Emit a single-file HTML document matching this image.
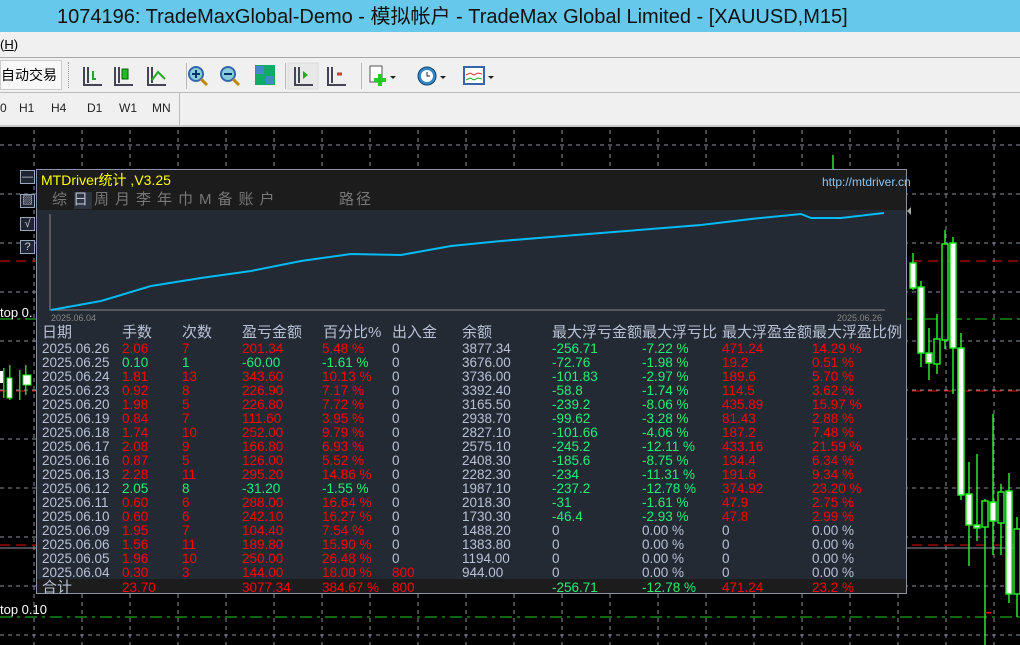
<!DOCTYPE html>
<html><head><meta charset="utf-8"><style>
*{margin:0;padding:0;box-sizing:border-box}
body{width:1020px;height:645px;overflow:hidden;background:#000;position:relative;font-family:"Liberation Sans","Noto Sans CJK SC",sans-serif}
.abs{position:absolute}
#title{left:0;top:0;width:1020px;height:32px;background:#66c8ea;color:#111;font-size:20px;line-height:34px;padding-left:57px;font-family:"Liberation Sans","Noto Sans CJK SC",sans-serif;white-space:nowrap}
#menu{left:0;top:32px;width:1020px;height:25px;background:#f0f0f0;font-size:13px;line-height:25px;color:#000}
#tb{left:0;top:57px;width:1020px;height:68px;background:#f0f0f0;border-top:1px solid #aaa}
.tf{font-size:12px;color:#222;top:101px}
#panel{left:36px;top:169px;width:871px;height:425px;background:#232a33;border:1px solid #8a94a6}
.t{position:absolute;font-size:13px;white-space:nowrap;line-height:14px;font-family:"Liberation Sans","Noto Sans CJK SC",sans-serif}
.g{color:#b8c2d6}.r{color:#f00}.n{color:#22ee77}
.btn{position:absolute;left:20px;width:15px;height:14px;border:1px solid #9aa6bb;background:#1f2530;color:#ccd;font-size:11px;line-height:12px;text-align:center}
</style></head><body>
<svg class="abs" style="left:0;top:125px" width="1020" height="520">
<rect x="0" y="0" width="1020" height="2" fill="#c8c8c8"/>
<g stroke="#8a8f9a" stroke-dasharray="4,4" stroke-width="1">
<line x1="34" y1="5" x2="34" y2="520"/><line x1="82" y1="5" x2="82" y2="520"/><line x1="130" y1="5" x2="130" y2="520"/><line x1="178" y1="5" x2="178" y2="520"/><line x1="226" y1="5" x2="226" y2="520"/><line x1="274" y1="5" x2="274" y2="520"/><line x1="322" y1="5" x2="322" y2="520"/><line x1="370" y1="5" x2="370" y2="520"/><line x1="418" y1="5" x2="418" y2="520"/><line x1="466" y1="5" x2="466" y2="520"/><line x1="514" y1="5" x2="514" y2="520"/><line x1="562" y1="5" x2="562" y2="520"/><line x1="610" y1="5" x2="610" y2="520"/><line x1="658" y1="5" x2="658" y2="520"/><line x1="706" y1="5" x2="706" y2="520"/><line x1="754" y1="5" x2="754" y2="520"/><line x1="802" y1="5" x2="802" y2="520"/><line x1="850" y1="5" x2="850" y2="520"/><line x1="898" y1="5" x2="898" y2="520"/><line x1="946" y1="5" x2="946" y2="520"/><line x1="994" y1="5" x2="994" y2="520"/>
<line x1="0" y1="20" x2="1020" y2="20"/><line x1="0" y1="69" x2="1020" y2="69"/><line x1="0" y1="118" x2="1020" y2="118"/><line x1="0" y1="167" x2="1020" y2="167"/><line x1="0" y1="216" x2="1020" y2="216"/><line x1="0" y1="265" x2="1020" y2="265"/><line x1="0" y1="314" x2="1020" y2="314"/><line x1="0" y1="363" x2="1020" y2="363"/><line x1="0" y1="412" x2="1020" y2="412"/><line x1="0" y1="461" x2="1020" y2="461"/><line x1="0" y1="510" x2="1020" y2="510"/>
</g>
<g stroke="#e01010" stroke-dasharray="10,6"><line x1="0" y1="136" x2="1020" y2="136"/><line x1="0" y1="266" x2="1020" y2="266"/><line x1="0" y1="420" x2="1020" y2="420"/></g>
<g stroke="#22cc22" stroke-dasharray="12,5,3,5"><line x1="0" y1="194" x2="1020" y2="194"/><line x1="0" y1="492" x2="1020" y2="492"/></g>
<line x1="0" y1="423" x2="1020" y2="423" stroke="#8a94a6"/>
<g stroke="#22ee22" stroke-width="1.5">
<line x1="913" y1="128" x2="913" y2="165"/><rect x="910" y="138" width="6" height="25" fill="#fff"/>
<line x1="921" y1="156" x2="921" y2="242"/><rect x="918" y="162" width="6" height="66" fill="#fff"/>
<line x1="929" y1="203" x2="929" y2="255"/><rect x="926" y="228" width="6" height="10" fill="#fff"/>
<line x1="937" y1="189" x2="937" y2="249"/><rect x="934" y="214" width="6" height="25" fill="#000"/>
<line x1="945" y1="105" x2="945" y2="224"/><rect x="942" y="119" width="6" height="96" fill="#000"/>
<line x1="953" y1="112" x2="953" y2="269"/><rect x="950" y="118" width="6" height="105" fill="#fff"/>
<line x1="961" y1="208" x2="961" y2="375"/><rect x="958" y="223" width="6" height="147" fill="#fff"/>
<line x1="969" y1="337" x2="969" y2="441"/><rect x="966" y="369" width="6" height="31" fill="#fff"/>
<line x1="977" y1="329" x2="977" y2="416"/><rect x="974" y="400" width="6" height="3" fill="#fff"/>
<line x1="985" y1="374" x2="985" y2="520"/><rect x="982" y="376" width="6" height="26" fill="#000"/>
<line x1="993" y1="289" x2="993" y2="430"/><rect x="990" y="377" width="6" height="19" fill="#fff"/>
<line x1="1001" y1="359" x2="1001" y2="430"/><rect x="998" y="367" width="6" height="31" fill="#000"/>
<line x1="1009" y1="348" x2="1009" y2="478"/><rect x="1006" y="366" width="6" height="103" fill="#fff"/>
<line x1="1017" y1="392" x2="1017" y2="492"/><rect x="1014" y="404" width="6" height="65" fill="#000"/>
<line x1="833" y1="30" x2="833" y2="45"/>
</g>
<rect x="985" y="487" width="6" height="1.5" fill="#f00"/>
<g fill="#22cc22"><rect x="3" y="243" width="1.5" height="30"/><rect x="9" y="240" width="1.5" height="35"/><rect x="19" y="245" width="1.5" height="30"/><rect x="25" y="240" width="1.5" height="30"/></g>
<rect x="0" y="246" width="3" height="12" fill="#fff"/><rect x="7" y="253" width="5" height="20" fill="#fff" stroke="#2e2" /><rect x="23" y="250" width="8" height="10" fill="#fff" stroke="#2e2"/>
</svg>
<div class="t" style="left:0;top:306px;color:#fff;font-size:13px">top 0.</div>
<div class="t" style="left:0;top:603px;color:#fff;font-size:13px">top 0.10</div>
<div class="btn" style="top:170px">—</div><div class="btn" style="top:194px">▨</div><div class="btn" style="top:217px">√</div><div class="btn" style="top:240px">?</div>

<div id="title" class="abs">1074196: TradeMaxGlobal-Demo - 模拟帐户 - TradeMax Global Limited - [XAUUSD,M15]</div>
<div id="menu" class="abs">(<u>H</u>)</div>
<div id="tb" class="abs">
<div class="abs" style="left:0;top:2px;width:62px;height:30px;border:1px solid #ccc;background:#f8f8f8;font-size:14px;line-height:28px">自动交易</div>
<div class="abs" style="left:68px;top:4px;width:2px;height:26px;border-left:1px dotted #999"></div>
<svg class="abs" style="left:76px;top:4px" width="430" height="28">
<g stroke="#445" stroke-width="2" fill="none"><path d="M8 5v18h18M12 5v16"/><path d="M39 5v18h18M43 5v16"/><path d="M72 5v18h18M76 5v16"/></g>
<path d="M17 9v8h3" stroke="#2a2" stroke-width="2" fill="none"/>
<rect x="46" y="7" width="6" height="10" fill="#2b2" stroke="#060"/>
<path d="M76 18l6-8l7 7" stroke="#2a2" stroke-width="2" fill="none"/>
<rect x="110" y="1" width="1" height="26" fill="#bbb"/>
<circle cx="120" cy="12" r="7" fill="#8cd" stroke="#36a" stroke-width="2"/><path d="M125 17l6 6" stroke="#b80" stroke-width="3"/><path d="M116 12h8M120 8v8" stroke="#036" stroke-width="2"/>
<circle cx="152" cy="12" r="7" fill="#8cd" stroke="#36a" stroke-width="2"/><path d="M157 17l6 6" stroke="#b80" stroke-width="3"/><path d="M148 12h8" stroke="#036" stroke-width="2"/>
<rect x="179" y="3" width="20" height="20" fill="#1a6"/><rect x="180" y="4" width="8" height="8" fill="#48c"/><rect x="190" y="14" width="8" height="8" fill="#48c"/>
<rect x="209" y="1" width="1" height="26" fill="#bbb"/>
<rect x="212" y="1" width="30" height="26" fill="#e8e8e8" stroke="#ddd"/>
<g stroke="#445" stroke-width="2" fill="none"><path d="M219 5v18h18M223 5v16"/><path d="M252 5v18h18M256 5v16"/></g>
<path d="M227 9l5 4l-5 4z" fill="#2a2"/><path d="M266 12h-5" stroke="#d33" stroke-width="3"/>
<rect x="285" y="1" width="1" height="26" fill="#bbb"/>
<rect x="294" y="4" width="12" height="16" fill="#fff" stroke="#555"/><path d="M304 12v12M298 18h12" stroke="#2c2" stroke-width="4"/>
<path d="M314 14h6l-3 3z" fill="#222"/>
<circle cx="351" cy="14" r="9" fill="#38c" stroke="#146" /><circle cx="351" cy="14" r="6" fill="#fff"/><path d="M351 10v4h3" stroke="#222" fill="none"/>
<path d="M364 14h6l-3 3z" fill="#222"/>
<rect x="388" y="5" width="20" height="17" fill="#fff" stroke="#36a" stroke-width="2"/><path d="M390 13l4-2l4 2l4-2l4 1" stroke="#d33" fill="none"/><path d="M390 18l4-2l4 2l4-2l4 1" stroke="#2a2" fill="none"/>
<path d="M412 14h6l-3 3z" fill="#222"/>
</svg>
<div class="abs" style="left:0;top:34px;width:1020px;height:1px;background:#bbb"></div>
<div class="abs" style="left:179px;top:35px;width:1px;height:32px;background:#bbb"></div>
</div>
<div class="abs tf" style="left:0">0</div><div class="abs tf" style="left:19px">H1</div><div class="abs tf" style="left:51px">H4</div><div class="abs tf" style="left:87px">D1</div><div class="abs tf" style="left:119px">W1</div><div class="abs tf" style="left:152px">MN</div>

<div id="panel" class="abs">
<div class="abs" style="left:0;top:0;width:869px;height:40px;background:#1c1c1c"></div>
<div class="t" style="left:4px;top:3px;color:#ffff00;font-size:14px">MTDriver统计 ,V3.25</div>
<div class="t" style="left:785px;top:5px;color:#8ac4f0;font-size:12px">http://mtdriver.cn</div>
<div class="abs" style="left:37px;top:22px;width:18px;height:17px;background:#2c3440"></div>
<div class="t" style="left:15px;top:23px;color:#777;font-size:15px;letter-spacing:6px">综<span style="color:#bbc">日</span>周月李年巾M备账户</div>
<div class="t" style="left:302px;top:23px;color:#777;font-size:15px;letter-spacing:2px">路径</div>
<svg class="abs" style="left:0;top:40px" width="869" height="115">
<path d="M13 4v96h835" stroke="#888" fill="none"/>
<polyline points="14,100 64,91 114,76 164,68 214,61 264,51 314,44 364,45 414,36 464,31 514,27 564,23 614,19 664,15 714,9 764,4 774,8 804,8 847,3" stroke="#00bbf5" stroke-width="2" fill="none"/>
<text x="14" y="111" fill="#888" font-size="9" font-family="Liberation Sans">2025.06.04</text>
<text x="800" y="111" fill="#888" font-size="9" font-family="Liberation Sans">2025.06.26</text>
</svg>
<div class="abs" style="left:866px;top:37px;width:0;height:0;border:4px solid transparent;border-right-color:#aaa"></div>
<div class="abs" style="left:0;top:409px;width:869px;height:14px;background:#1c1c1c"></div>
</div>

<div style="position:absolute;left:0;top:0">
<div class="t g" style="left:42px;top:326px;font-size:15px">日期</div><div class="t g" style="left:122px;top:326px;font-size:15px">手数</div><div class="t g" style="left:182px;top:326px;font-size:15px">次数</div><div class="t g" style="left:242px;top:326px;font-size:15px">盈亏金额</div><div class="t g" style="left:323px;top:326px;font-size:15px">百分比%</div><div class="t g" style="left:392px;top:326px;font-size:15px">出入金</div><div class="t g" style="left:462px;top:326px;font-size:15px">余额</div><div class="t g" style="left:552px;top:326px;font-size:15px">最大浮亏金额</div><div class="t g" style="left:642px;top:326px;font-size:15px">最大浮亏比</div><div class="t g" style="left:722px;top:326px;font-size:15px">最大浮盈金额</div><div class="t g" style="left:812px;top:326px;font-size:15px">最大浮盈比例</div>
</div>
<style>.row{position:absolute;left:0;width:1020px;height:14px}
.row span{position:absolute;top:0;font-size:13.5px;line-height:14px;white-space:nowrap;font-family:"Liberation Sans",sans-serif}
.row span:nth-child(1){left:42px;color:#b8c2d6}.row span:nth-child(2){left:122px}.row span:nth-child(3){left:182px}.row span:nth-child(4){left:242px}.row span:nth-child(5){left:322px}.row span:nth-child(6){left:392px}.row span:nth-child(7){left:462px;color:#b8c2d6}.row span:nth-child(8){left:552px}.row span:nth-child(9){left:642px}.row span:nth-child(10){left:722px}.row span:nth-child(11){left:812px}
.R span{color:#f00}.N span{color:#22ee77}
.row span.g{color:#b8c2d6}.row span.n{color:#22ee77}.row span.r{color:#f00}
</style>
<div class="row R" style="top:342px"><span>2025.06.26</span><span>2.06</span><span>7</span><span>201.34</span><span>5.48 %</span><span class="g">0</span><span>3877.34</span><span class="n">-256.71</span><span class="n">-7.22 %</span><span>471.24</span><span>14.29 %</span></div>
<div class="row N" style="top:356px"><span>2025.06.25</span><span>0.10</span><span>1</span><span>-60.00</span><span>-1.61 %</span><span class="g">0</span><span>3676.00</span><span>-72.76</span><span>-1.98 %</span><span class="r">19.2</span><span class="r">0.51 %</span></div>
<div class="row R" style="top:370px"><span>2025.06.24</span><span>1.81</span><span>13</span><span>343.60</span><span>10.13 %</span><span class="g">0</span><span>3736.00</span><span class="n">-101.83</span><span class="n">-2.97 %</span><span>189.6</span><span>5.70 %</span></div>
<div class="row R" style="top:384px"><span>2025.06.23</span><span>0.92</span><span>8</span><span>226.90</span><span>7.17 %</span><span class="g">0</span><span>3392.40</span><span class="n">-58.8</span><span class="n">-1.74 %</span><span>114.5</span><span>3.62 %</span></div>
<div class="row R" style="top:398px"><span>2025.06.20</span><span>1.98</span><span>5</span><span>226.80</span><span>7.72 %</span><span class="g">0</span><span>3165.50</span><span class="n">-239.2</span><span class="n">-8.06 %</span><span>435.89</span><span>15.97 %</span></div>
<div class="row R" style="top:412px"><span>2025.06.19</span><span>0.84</span><span>7</span><span>111.60</span><span>3.95 %</span><span class="g">0</span><span>2938.70</span><span class="n">-99.62</span><span class="n">-3.28 %</span><span>81.43</span><span>2.88 %</span></div>
<div class="row R" style="top:426px"><span>2025.06.18</span><span>1.74</span><span>10</span><span>252.00</span><span>9.79 %</span><span class="g">0</span><span>2827.10</span><span class="n">-101.66</span><span class="n">-4.06 %</span><span>187.2</span><span>7.48 %</span></div>
<div class="row R" style="top:440px"><span>2025.06.17</span><span>2.08</span><span>9</span><span>166.80</span><span>6.93 %</span><span class="g">0</span><span>2575.10</span><span class="n">-245.2</span><span class="n">-12.11 %</span><span>433.16</span><span>21.59 %</span></div>
<div class="row R" style="top:454px"><span>2025.06.16</span><span>0.87</span><span>5</span><span>126.00</span><span>5.52 %</span><span class="g">0</span><span>2408.30</span><span class="n">-185.6</span><span class="n">-8.75 %</span><span>134.4</span><span>6.34 %</span></div>
<div class="row R" style="top:468px"><span>2025.06.13</span><span>2.28</span><span>11</span><span>295.20</span><span>14.86 %</span><span class="g">0</span><span>2282.30</span><span class="n">-234</span><span class="n">-11.31 %</span><span>191.6</span><span>9.34 %</span></div>
<div class="row N" style="top:482px"><span>2025.06.12</span><span>2.05</span><span>8</span><span>-31.20</span><span>-1.55 %</span><span class="g">0</span><span>1987.10</span><span>-237.2</span><span>-12.78 %</span><span class="r">374.92</span><span class="r">23.20 %</span></div>
<div class="row R" style="top:496px"><span>2025.06.11</span><span>0.60</span><span>6</span><span>288.00</span><span>16.64 %</span><span class="g">0</span><span>2018.30</span><span class="n">-31</span><span class="n">-1.61 %</span><span>47.9</span><span>2.75 %</span></div>
<div class="row R" style="top:510px"><span>2025.06.10</span><span>0.60</span><span>6</span><span>242.10</span><span>16.27 %</span><span class="g">0</span><span>1730.30</span><span class="n">-46.4</span><span class="n">-2.93 %</span><span>47.8</span><span>2.99 %</span></div>
<div class="row R" style="top:524px"><span>2025.06.09</span><span>1.95</span><span>7</span><span>104.40</span><span>7.54 %</span><span class="g">0</span><span>1488.20</span><span class="g">0</span><span class="g">0.00 %</span><span class="g">0</span><span class="g">0.00 %</span></div>
<div class="row R" style="top:538px"><span>2025.06.06</span><span>1.56</span><span>11</span><span>189.80</span><span>15.90 %</span><span class="g">0</span><span>1383.80</span><span class="g">0</span><span class="g">0.00 %</span><span class="g">0</span><span class="g">0.00 %</span></div>
<div class="row R" style="top:552px"><span>2025.06.05</span><span>1.96</span><span>10</span><span>250.00</span><span>26.48 %</span><span class="g">0</span><span>1194.00</span><span class="g">0</span><span class="g">0.00 %</span><span class="g">0</span><span class="g">0.00 %</span></div>
<div class="row R" style="top:566px"><span>2025.06.04</span><span>0.30</span><span>3</span><span>144.00</span><span>18.00 %</span><span>800</span><span>944.00</span><span class="g">0</span><span class="g">0.00 %</span><span class="g">0</span><span class="g">0.00 %</span></div>
<div class="row R" style="top:581px"><span style="font-size:15px">合计</span><span>23.70</span><span></span><span>3077.34</span><span>384.67 %</span><span>800</span><span></span><span class="n">-256.71</span><span class="n">-12.78 %</span><span>471.24</span><span>23.2 %</span></div>
</body></html>
